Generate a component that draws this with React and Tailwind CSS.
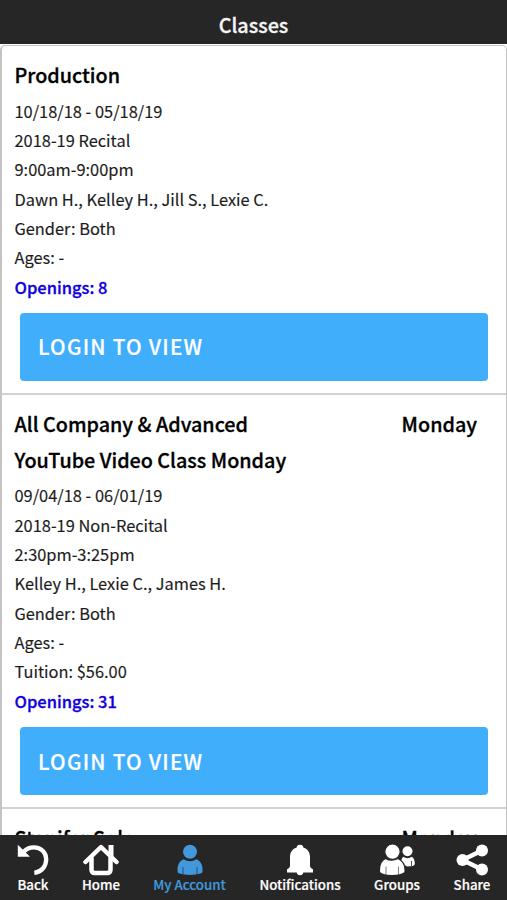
const classes = [
  {
    name: ["Production"],
    day: "",
    details: [
      "10/18/18 - 05/18/19",
      "2018-19 Recital",
      "9:00am-9:00pm",
      "Dawn H., Kelley H., Jill S., Lexie C.",
      "Gender: Both",
      "Ages: -",
    ],
    openings: 8,
  },
  {
    name: ["All Company & Advanced", "YouTube Video Class Monday"],
    day: "Monday",
    details: [
      "09/04/18 - 06/01/19",
      "2018-19 Non-Recital",
      "2:30pm-3:25pm",
      "Kelley H., Lexie C., James H.",
      "Gender: Both",
      "Ages: -",
      "Tuition: $56.00",
    ],
    openings: 31,
  },
  {
    name: ["Stanifer Solo"],
    day: "Monday",
  },
];

const BackIcon = () => (
  <svg className="w-8 h-8" viewBox="0 0 32 32" fill="none">
    <path d="M6.500 8C9.500 4.500 13 3.400 17 3.400C24 3.400 29.200 8.500 29.200 15.300C29.200 22.500 24.300 28.200 17.300 28.800" stroke="currentColor" strokeWidth="4.300" />
    <path d="M.8 .8V12.800H13L9.500 9.200Z" fill="currentColor" />
  </svg>
);

const HomeIcon = () => (
  <svg className="w-9 h-8" viewBox="0 0 36 32" fill="none" stroke="currentColor" strokeWidth="4.500" strokeLinecap="round" strokeLinejoin="round">
    <path d="M2.500 18L18 3L33.500 18" />
    <path d="M28 1V12" strokeLinecap="butt" strokeWidth="5" />
    <path d="M8.500 14V25.500Q8.500 29 12 29H24Q27.500 29 27.500 25.500V14" />
  </svg>
);

const AccountIcon = () => (
  <svg className="w-8 h-8" viewBox="0 0 32 32" fill="currentColor">
    <circle cx="16" cy="7.800" r="7" />
    <path d="M9.500 15.200Q12.500 17.300 16 17.300T22.500 15.200C26.500 17 28.500 21 28.500 25V27.500Q28.500 29 26.500 29.600Q22 31 16 31T5.500 29.600Q3.500 29 3.500 27.500V25C3.500 21 5.500 17 9.500 15.200Z" />
    <path d="M9 23V30M23 23V30" stroke="#1e527e" strokeWidth="1" />
  </svg>
);

const BellIcon = () => (
  <svg className="w-8 h-8" viewBox="0 0 32 32" fill="currentColor">
    <path d="M16 .8C18 .8 19.300 2 19.500 3.700C24 5 26 8.500 26 13V21.500C26 23.500 27 24.500 29 25.200V28.500H19.300C19 30.300 17.800 31.200 16 31.200S13 30.300 12.700 28.500H3V25.200C5 24.500 6 23.500 6 21.500V13C6 8.500 8 5 12.500 3.700C12.700 2 14 .8 16 .8Z" />
  </svg>
);

const GroupsIcon = () => (
  <svg className="w-9 h-8" viewBox="0 0 36 32" fill="currentColor">
    <circle cx="28.500" cy="7.200" r="5" />
    <path d="M24 12.800Q28.500 15.500 33 12.800Q35.800 14.800 35.800 20Q35.800 22.500 28 22.500L21 18.500Z" />
    <path d="M32.500 17V22" stroke="#262626" strokeWidth=".8" />
    <g stroke="#262626" strokeWidth="1.200">
      <path d="M6.500 14.500Q12.500 18 19 14.500C24 17 26 21.500 26 25.500V28.500Q22 31.500 13 31.500T.5 28.500V25.500C.5 21 2.500 16.500 6.500 14.500Z" />
      <circle cx="13.500" cy="7.700" r="7.700" />
    </g>
    <path d="M7 22.500V30.500M19.500 22.500V30.500" stroke="#262626" strokeWidth=".6" />
  </svg>
);

const ShareIcon = () => (
  <svg className="w-8 h-8" viewBox="0 0 32 32" fill="currentColor">
    <path d="M26 6.500L6.500 16L26 25.500" fill="none" stroke="currentColor" strokeWidth="4.500" />
    <circle cx="26" cy="6.500" r="6" />
    <circle cx="6.500" cy="16" r="6" />
    <circle cx="26" cy="25.500" r="6" />
  </svg>
);

const tabs = [
  { label: "Back", icon: BackIcon, width: "w-[66px]" },
  { label: "Home", icon: HomeIcon, width: "w-[70px]" },
  { label: "My Account", icon: AccountIcon, width: "w-[107px]", active: true },
  { label: "Notifications", icon: BellIcon, width: "w-[114px]" },
  { label: "Groups", icon: GroupsIcon, width: "w-[80px]" },
  { label: "Share", icon: ShareIcon, width: "w-[70px]" },
];

const ClassCard = ({ item }) => {
  return (
    <div className="shrink-0 border-b-2 border-[#d2d2d2] pt-[10.6px] pb-3 pl-[12.5px] pr-[18px]">
      <div className="flex justify-between text-[19.75px] font-medium leading-[36.7px] text-black [-webkit-text-stroke:0.3px]">
        <div>
          {item.name.map((line) => (
            <h2 key={line}>{line}</h2>
          ))}
        </div>
        <span className="pr-[11px]">{item.day}</span>
      </div>
      {item.details && (
        <>
          <div className="pt-[2.5px] text-[16.4px] leading-[29.33px] text-[#1c1c1c] [-webkit-text-stroke:0.15px]">
            {item.details.map((line) => (
              <p key={line}>{line}</p>
            ))}
            <p className="text-[16.5px] font-medium text-[#0f00dc] [-webkit-text-stroke:0.3px]">Openings: {item.openings}</p>
          </div>
          <button className="mt-[11px] ml-[5.5px] block h-[68px] w-[468px] rounded-[4px] bg-[#41aefc] pl-[18px] text-left text-[20.7px] font-medium tracking-[1.25px] text-white [-webkit-text-stroke:0.2px]">
            LOGIN TO VIEW
          </button>
        </>
      )}
    </div>
  );
};

const App = () => {
  return (
    <div className="flex h-[900px] w-[507px] flex-col overflow-hidden bg-white font-['Noto_Sans_CJK_SC','Noto_Sans',sans-serif]">
      <header className="flex h-11 shrink-0 items-center justify-center bg-[#262626] pt-[5px] text-[19.75px] font-medium text-[#f5f5f5] [-webkit-text-stroke:0.3px]">
        <h1>Classes</h1>
      </header>

      <main className="flex min-h-0 flex-1 flex-col overflow-hidden pt-[1px]">
        <div className="flex flex-1 flex-col overflow-hidden rounded-tl-[5px] rounded-tr-[5px] border-t border-r border-l-2 border-[#c4c4c4] pt-[0.9px]">
          {classes.map((item) => (
            <ClassCard key={item.name[0]} item={item} />
          ))}
        </div>
      </main>

      <nav className="flex h-[65px] shrink-0 bg-[#262626]">
        {tabs.map(({ label, icon: Icon, width, active }) => (
          <div
            key={label}
            className={`${width} flex shrink-0 flex-col items-center pt-[9px] ${active ? "text-[#4398dc]" : "text-white"}`}
          >
            <Icon />
            <span className="whitespace-nowrap text-[13.3px] font-medium leading-[17px] [-webkit-text-stroke:0.2px]">{label}</span>
          </div>
        ))}
      </nav>
    </div>
  );
};

export default App;
